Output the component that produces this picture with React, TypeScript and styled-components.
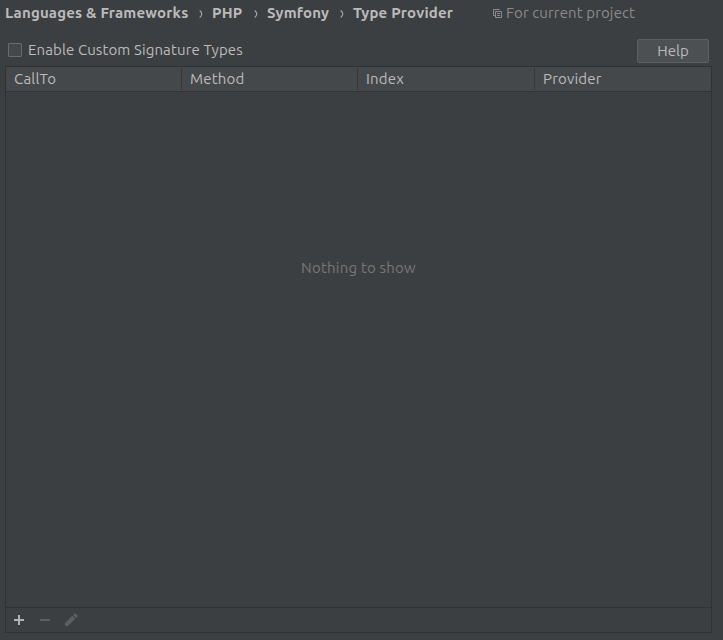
import React from "react";
import styled, { createGlobalStyle } from "styled-components";

const GlobalStyle = createGlobalStyle`
  * { box-sizing: border-box; }
  body {
    margin: 0;
    background: #3c3f41;
    color: #bbbbbb;
    font-family: Ubuntu, "Noto Sans", sans-serif;
    font-size: 15px;
    line-height: 20px;
    overflow: hidden;
  }
`;

const Page = styled.main`
  display: flex;
  flex-direction: column;
  width: 723px;
  height: 640px;
  padding: 3px 11px 7px 5px;
`;

const Breadcrumbs = styled.nav`
  display: flex;
  align-items: center;
  height: 20px;
  white-space: nowrap;
`;

const Crumb = styled.span<{ $width: number }>`
  flex: none;
  width: ${(p) => p.$width}px;
  font-weight: 700;
  letter-spacing: 0.19px;
`;

const Chevron = styled.svg`
  flex: none;
  width: 4px;
  height: 8px;
  margin: 2px 9px 0 12px;
  fill: none;
  stroke: #aaaaaa;
  stroke-width: 1.1;
`;

const Scope = styled.span`
  display: flex;
  align-items: center;
  gap: 4px;
  margin-left: 40px;
  color: #8a8a8a;
  letter-spacing: 0.12px;
`;

const ScopeIcon = styled.svg`
  width: 9px;
  height: 9px;
  margin-top: 1px;
  fill: none;
  stroke: #878b8f;
`;

const Options = styled.div`
  display: flex;
  justify-content: space-between;
  height: 43px;
  padding: 16px 3px 3px 3px;
`;

const CheckLabel = styled.label`
  display: flex;
  align-items: center;
  gap: 6px;
  height: 22px;
  letter-spacing: 0.12px;
  white-space: nowrap;
`;

const Checkbox = styled.input`
  appearance: none;
  width: 14px;
  height: 14px;
  margin: 0;
  border: 1px solid #6b6b6b;
  border-radius: 1px;
  background: #43494a;
`;

const Button = styled.button`
  width: 72px;
  height: 24px;
  padding: 0;
  border: 1px solid #5e6060;
  border-radius: 2px;
  background: #4c5052;
  color: #bbbbbb;
  font: inherit;
`;

const Table = styled.section`
  display: flex;
  flex: 1;
  flex-direction: column;
  border: 1px solid #323232;
`;

const Header = styled.div`
  display: grid;
  grid-template-columns: 176px 176px 177px 1fr;
  height: 25px;
  padding: 1px 0;
  border-bottom: 1px solid #323436;
  background: #45484a;
`;

const Column = styled.div`
  padding: 1px 8px 0;
  border-right: 1px solid #35383a;
  letter-spacing: 0.18px;
  line-height: 20px;

  &:last-child { border-right: 0; }
`;

const Body = styled.div`
  flex: 1;
  padding-top: 166px;
  color: #777777;
  letter-spacing: 0.2px;
  text-align: center;
`;

const Toolbar = styled.div`
  display: flex;
  align-items: center;
  gap: 10px;
  height: 25px;
  padding-left: 5px;
  border-top: 1px solid #323232;
`;

const Tool = styled.button`
  display: block;
  width: 16px;
  height: 16px;
  padding: 0;
  border: 0;
  background: none;
  color: #afb1b3;

  &:disabled { color: #5c5e60; }

  svg { display: block; fill: currentColor; }
`;

const Separator = () => (
  <Chevron viewBox="0 0 4 8"><path d="M.7.5Q2.6 2 2.8 4 2.6 6 .7 7.5" /></Chevron>
);

export default function App() {
  return (
    <>
      <GlobalStyle />
      <Page>
        <Breadcrumbs>
          <Crumb $width={182}>Languages &amp; Frameworks</Crumb>
          <Separator />
          <Crumb $width={30}>PHP</Crumb>
          <Separator />
          <Crumb $width={61}>Symfony</Crumb>
          <Separator />
          <Crumb $width={100}>Type Provider</Crumb>
          <Scope>
            <ScopeIcon viewBox="0 0 9 9">
              <path d="M.5 6.5V.5H6.5M2.5 2.5H8.5V8.5H2.5ZM4 4.5H7M4 6.5H7M.5 6.5H2" />
            </ScopeIcon>
            For current project
          </Scope>
        </Breadcrumbs>
        <Options>
          <CheckLabel><Checkbox type="checkbox" />Enable Custom Signature Types</CheckLabel>
          <Button>Help</Button>
        </Options>
        <Table>
          <Header>
            {["CallTo", "Method", "Index", "Provider"].map((name) => (
              <Column key={name}>{name}</Column>
            ))}
          </Header>
          <Body>Nothing to show</Body>
          <Toolbar>
            <Tool aria-label="Add">
              <svg viewBox="0 0 16 16"><path d="M7 3h2v4h4v2H9v4H7V9H3V7h4z" /></svg>
            </Tool>
            <Tool aria-label="Remove" disabled>
              <svg viewBox="0 0 16 16"><path d="M3 7h10v2H3z" /></svg>
            </Tool>
            <Tool aria-label="Edit" disabled>
              <svg viewBox="0 0 16 16"><path d="M2 11.1 9.3 3.8l2.9 2.9L4.9 14H2zM10 3.1l1.4-1.4q.8-.7 1.6 0l1.4 1.4q.7.8 0 1.6L12.9 6z" /></svg>
            </Tool>
          </Toolbar>
        </Table>
      </Page>
    </>
  );
}
